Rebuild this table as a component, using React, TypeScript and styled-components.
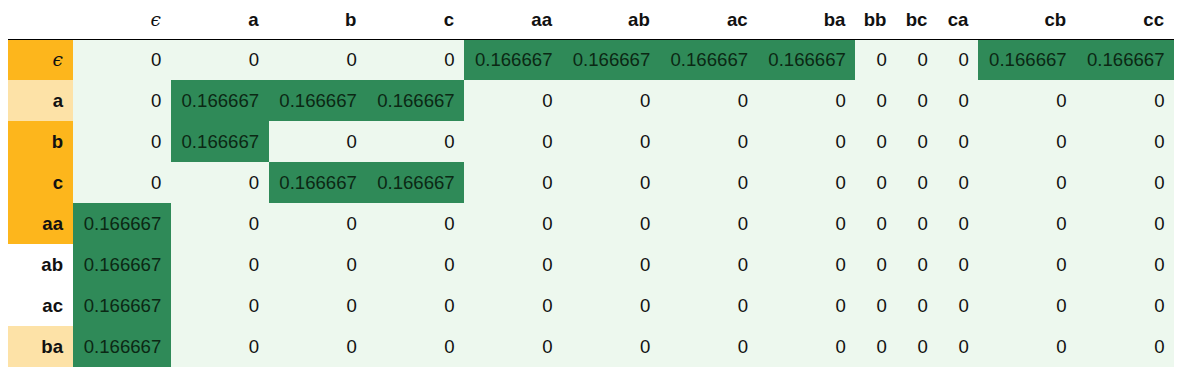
import React from 'react'
import styled, { createGlobalStyle } from 'styled-components'

const GlobalStyle = createGlobalStyle`
    body {
        margin: 8px;
        background: #ffffff;
        font-family: "Liberation Sans", Arial, sans-serif;
    }
`

const columns = ['ϵ', 'a', 'b', 'c', 'aa', 'ab', 'ac', 'ba', 'bb', 'bc', 'ca', 'cb', 'cc']
const narrow = ['bb', 'bc', 'ca']

type Mark = 'strong' | 'soft' | 'none'

const rows: { label: string; mark: Mark; hits: string[] }[] = [
    { label: 'ϵ', mark: 'strong', hits: ['aa', 'ab', 'ac', 'ba', 'cb', 'cc'] },
    { label: 'a', mark: 'soft', hits: ['a', 'b', 'c'] },
    { label: 'b', mark: 'strong', hits: ['a'] },
    { label: 'c', mark: 'strong', hits: ['b', 'c'] },
    { label: 'aa', mark: 'strong', hits: ['ϵ'] },
    { label: 'ab', mark: 'none', hits: ['ϵ'] },
    { label: 'ac', mark: 'none', hits: ['ϵ'] },
    { label: 'ba', mark: 'soft', hits: ['ϵ'] },
]

const Table = styled.table`
    border-collapse: collapse;
    border-spacing: 0;
    table-layout: fixed;
    width: 1166px;
    font-size: 18.6px;
    color: #111111;
`

const Col = styled.col<{ $w: number }>`
    width: ${p => p.$w}px;
`

const HeadRow = styled.tr`
    border-bottom: 1px solid #000000;
`

const HeadCell = styled.th`
    height: 31px;
    padding: 1px 10px 0 0;
    box-sizing: border-box;
    text-align: right;
    vertical-align: top;
    line-height: 21px;
    font-weight: bold;
    background: #ffffff;
    white-space: nowrap;
`

const IndexCell = styled.th<{ $mark: Mark }>`
    height: 41px;
    padding: 0 10px 0 0;
    box-sizing: border-box;
    text-align: right;
    vertical-align: middle;
    font-weight: bold;
    background: ${p => (p.$mark === 'strong' ? '#fdb61c' : p.$mark === 'soft' ? '#fde2a7' : '#ffffff')};
`

const ValueCell = styled.td<{ $hit: boolean }>`
    height: 41px;
    padding: 0 9.5px 0 0;
    box-sizing: border-box;
    text-align: right;
    vertical-align: middle;
    white-space: nowrap;
    background: ${p => (p.$hit ? '#2f8a58' : '#edf8ee')};
    color: ${p => (p.$hit ? '#0b2814' : '#111111')};
`

const Epsilon = styled.span`
    font-family: "DejaVu Serif", "Liberation Serif", serif;
    font-style: italic;
    font-weight: normal;
`

const Label = ({ text }: { text: string }) =>
    text === 'ϵ' ? <Epsilon>ϵ</Epsilon> : <>{text}</>

export default function App() {
    return (
        <>
            <GlobalStyle />
            <Table>
                <colgroup>
                    <Col $w={65} />
                    {columns.map(c => (
                        <Col key={c} $w={narrow.includes(c) ? 41 : 97.8} />
                    ))}
                </colgroup>
                <thead>
                    <HeadRow>
                        <HeadCell />
                        {columns.map(c => (
                            <HeadCell key={c}>
                                <Label text={c} />
                            </HeadCell>
                        ))}
                    </HeadRow>
                </thead>
                <tbody>
                    {rows.map(r => (
                        <tr key={r.label}>
                            <IndexCell $mark={r.mark}>
                                <Label text={r.label} />
                            </IndexCell>
                            {columns.map(c => {
                                const hit = r.hits.includes(c)
                                return (
                                    <ValueCell key={c} $hit={hit}>
                                        {hit ? '0.166667' : '0'}
                                    </ValueCell>
                                )
                            })}
                        </tr>
                    ))}
                </tbody>
            </Table>
        </>
    )
}
